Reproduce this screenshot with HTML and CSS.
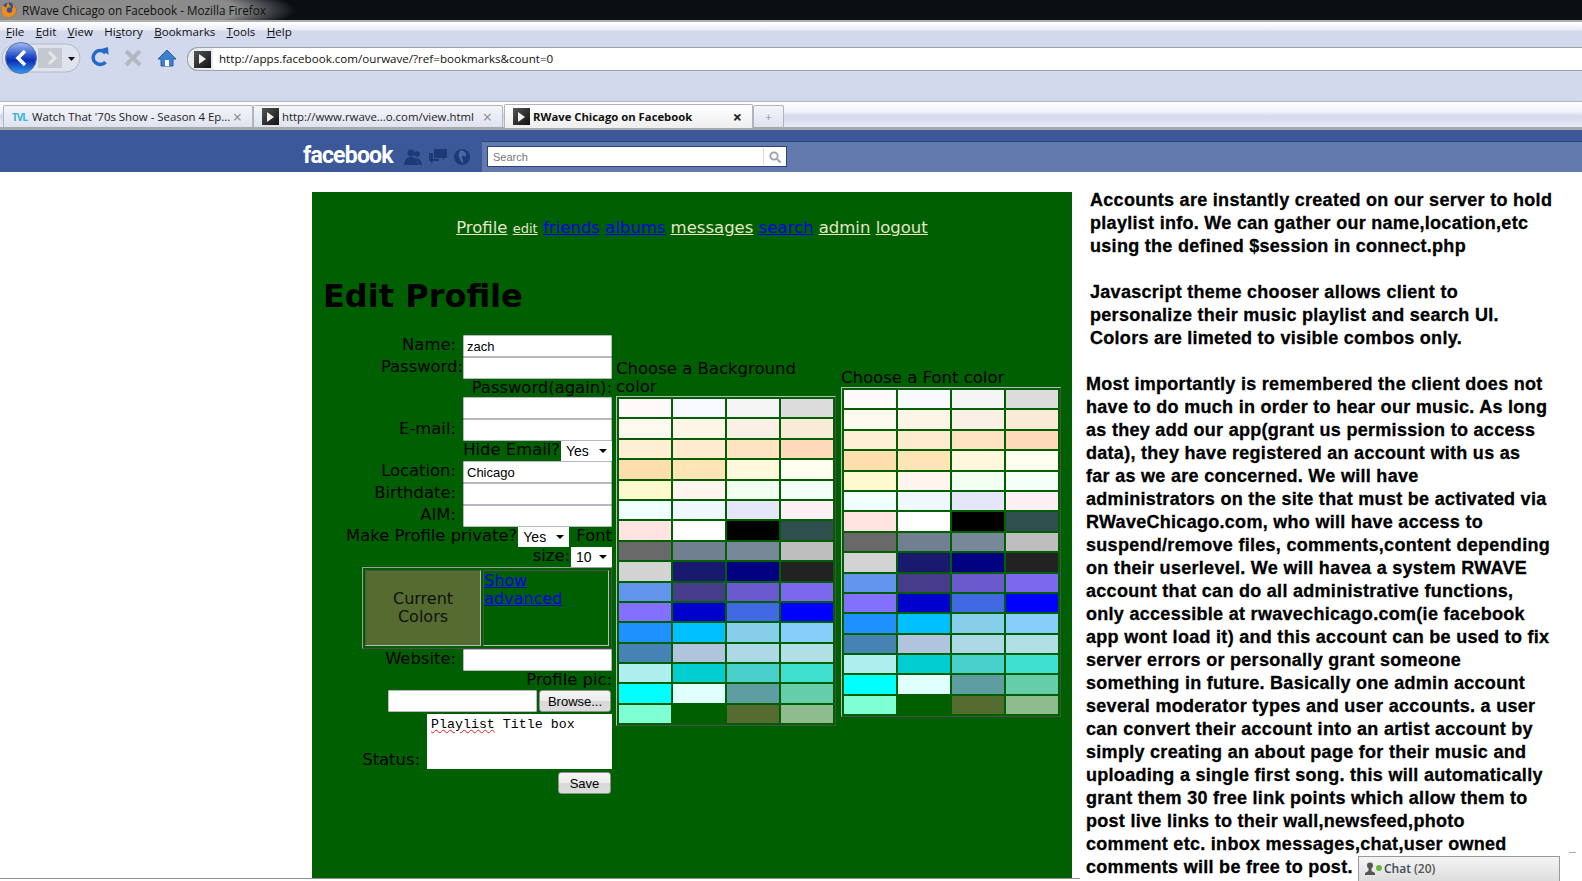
FILE: index.html
```html
<!DOCTYPE html>
<html>
<head>
    <title>RWave Chicago on Facebook - Mozilla Firefox</title>
    <link rel="stylesheet" href="styles.css">
</head>
<body>
    <div class="title-bar">
        <svg class="ff-logo" width="16" height="16" viewBox="0 0 16 16">
            <circle cx="8" cy="8" r="7.5" fill="#2a4f94"/>
            <path d="M2 3 C0 6 0 11 3 14 C6 16.500 12 16 14.500 11.500 C16.500 7 14 3 11 1 C12.500 4 12.500 6 11 6.500 C10 4 8 3.500 7 0.500 C5 3 6 4.500 5 5.500 C4 5 3 4 2 3 Z" fill="#f08a1e"/>
            <circle cx="8.500" cy="8" r="2.700" fill="#31528f"/>
        </svg>
        <span class="title-text">RWave Chicago on Facebook - Mozilla Firefox</span>
    </div>

    <div class="chrome-top">
        <div class="menu-bar">
            <span class="menu-item"><u>F</u>ile</span>
            <span class="menu-item"><u>E</u>dit</span>
            <span class="menu-item"><u>V</u>iew</span>
            <span class="menu-item">Hi<u>s</u>tory</span>
            <span class="menu-item"><u>B</u>ookmarks</span>
            <span class="menu-item"><u>T</u>ools</span>
            <span class="menu-item"><u>H</u>elp</span>
        </div>
        <div class="nav-bar">
            <svg class="nav-buttons" width="187" height="32" viewBox="0 0 187 32">
                <defs>
                    <linearGradient id="backFill" x1="0" y1="0" x2="0" y2="1">
                        <stop offset="0" stop-color="#a6c0f0"/>
                        <stop offset="0.42" stop-color="#2a55cc"/>
                        <stop offset="0.58" stop-color="#0a2fb5"/>
                        <stop offset="1" stop-color="#2f9cf0"/>
                    </linearGradient>
                </defs>
                <rect x="2" y="2" width="78" height="28" rx="14" fill="#dfe3ee" stroke="#b4b9c6"/>
                <rect x="38" y="6" width="24" height="20" fill="#c4c8d0"/>
                <path d="M49 10 L55 16 L49 22" fill="none" stroke="#e4e7ea" stroke-width="3"/>
                <path d="M68 15 H75 L71.500 19 Z" fill="#111"/>
                <circle cx="21" cy="16" r="15.500" fill="url(#backFill)" stroke="#5a6fb0"/>
                <path d="M25 9 L18 16 L25 23" fill="none" stroke="#fff" stroke-width="3.500"/>
                <path d="M105.500 11 A7 7 0 1 0 105.500 20" fill="none" stroke="#2468c8" stroke-width="3.500"/>
                <path d="M101 7 L108 5 L108.500 13 Z" fill="#2468c8"/>
                <path d="M126 9 L140 23 M140 9 L126 23" stroke="#b4b8c0" stroke-width="4"/>
                <path d="M167 8 L158 17 H161 V24 H173 V17 H176 Z" fill="#3f7fd0" stroke="#2a5ba8"/>
                <rect x="165" y="18" width="4" height="6" fill="#fff"/>
            </svg>
            <div class="url-bar">
                <span class="identity"><span class="play"></span></span>
                <span class="url-text">http://apps.facebook.com/ourwave/?ref=bookmarks&amp;count=0</span>
            </div>
        </div>
    </div>

    <div class="tab-strip">
        <div class="tab">
            <span class="tvl">TVL</span>
            <span class="tab-label">Watch That '70s Show - Season 4 Ep...</span>
            <span class="tab-close">×</span>
        </div>
        <div class="tab">
            <span class="identity tab-icon"><span class="play"></span></span>
            <span class="tab-label">http://www.rwave...o.com/view.html</span>
            <span class="tab-close">×</span>
        </div>
        <div class="tab tab-active">
            <span class="identity tab-icon"><span class="play"></span></span>
            <span class="tab-label">RWave Chicago on Facebook</span>
            <span class="tab-close">×</span>
        </div>
        <div class="tab tab-new">+</div>
    </div>

    <div class="fb-bar">
        <span class="fb-logo">facebook</span>
        <svg class="fb-icon" width="18" height="16" viewBox="0 0 18 16">
            <circle cx="7" cy="4" r="3.500" fill="#1d3a74"/>
            <path d="M0 16 C1 10 3 8 7 8 C11 8 13 10 14 16 Z" fill="#1d3a74"/>
            <circle cx="13" cy="5" r="2.800" fill="#1d3a74"/>
            <path d="M12 9 C15 9 17 11 18 16 H15 Z" fill="#1d3a74"/>
        </svg>
        <svg class="fb-icon" width="18" height="16" viewBox="0 0 18 16">
            <path d="M5 0 H18 V9 H15 V11 L13 9 H5 Z" fill="#1d3a74"/>
            <path d="M0 4 H4 V10 H10 V12 H4 L2 15 V12 H0 Z" fill="#1d3a74"/>
        </svg>
        <svg class="fb-icon" width="16" height="16" viewBox="0 0 16 16">
            <circle cx="8" cy="8" r="8" fill="#1d3a74"/>
            <path d="M7 1 C10 2 13 4 12 7 C10 8 9 6 8 7 C7 9 10 10 9 14 C7 13 6 10 5 8 C4 6 5 3 7 1 Z" fill="#4a68a0"/>
        </svg>
        <div class="search-band">
            <div class="search-box">
                <span class="search-text">Search</span>
                <span class="search-btn">
                    <svg width="12" height="12" viewBox="0 0 12 12">
                        <circle cx="5" cy="5" r="3.700" fill="none" stroke="#9aa0ad" stroke-width="1.800"/>
                        <path d="M8 8 L11.500 11.500" stroke="#9aa0ad" stroke-width="2"/>
                    </svg>
                </span>
            </div>
        </div>
    </div>

    <div class="page">
        <div class="panel">
            <div class="nav-links">
                <a class="pale" href="#">Profile</a>
                <a class="pale small" href="#">edit</a>
                <a href="#">friends</a>
                <a href="#">albums</a>
                <a class="pale" href="#">messages</a>
                <a href="#">search</a>
                <a class="pale" href="#">admin</a>
                <a class="pale" href="#">logout</a>
            </div>
            <h1>Edit Profile</h1>
            <div class="columns">
                <form class="profile-form">
                    <div class="row"><label class="gap">Name:</label><input class="field" value="zach"></div>
                    <div class="row"><label>Password:</label><input class="field"></div>
                    <div class="row row-text"><label>Password(again):</label></div>
                    <div class="row"><input class="field"></div>
                    <div class="row"><label class="gap">E-mail:</label><input class="field"></div>
                    <div class="row row-sel"><label>Hide Email?</label><span class="select">Yes</span></div>
                    <div class="row"><label class="gap">Location:</label><input class="field" value="Chicago"></div>
                    <div class="row"><label class="gap">Birthdate:</label><input class="field"></div>
                    <div class="row"><label class="gap">AIM:</label><input class="field"></div>
                    <div class="row row-sel"><label>Make Profile private?</label><span class="select">Yes</span><label class="font-word">Font</label></div>
                    <div class="row row-sel"><label>size:</label><span class="select select-small">10</span></div>
                    <div class="current">
                        <div class="current-cell current-swatch">Current Colors</div>
                        <div class="current-cell current-link"><a href="#">Show advanced</a></div>
                    </div>
                    <div class="row"><label class="gap">Website:</label><input class="field"></div>
                    <div class="row row-text"><label>Profile pic:</label></div>
                    <div class="row row-file"><input class="field"><button type="button" class="btn btn-browse">Browse...</button></div>
                    <div class="row row-status"><label class="gap">Status:</label><div class="status-box"><span class="squiggle">Playlist</span> Title box</div></div>
                    <div class="row row-save"><button type="button" class="btn btn-save">Save</button></div>
                </form>

                <div class="picker picker-bg">
                    <div class="picker-label">Choose a Background color</div>
                    <div class="swatches">
                        <div style="background:snow"></div><div style="background:ghostwhite"></div><div style="background:whitesmoke"></div><div style="background:gainsboro"></div>
                        <div style="background:floralwhite"></div><div style="background:oldlace"></div><div style="background:linen"></div><div style="background:antiquewhite"></div>
                        <div style="background:papayawhip"></div><div style="background:blanchedalmond"></div><div style="background:bisque"></div><div style="background:peachpuff"></div>
                        <div style="background:navajowhite"></div><div style="background:moccasin"></div><div style="background:cornsilk"></div><div style="background:ivory"></div>
                        <div style="background:lemonchiffon"></div><div style="background:seashell"></div><div style="background:honeydew"></div><div style="background:mintcream"></div>
                        <div style="background:azure"></div><div style="background:aliceblue"></div><div style="background:lavender"></div><div style="background:lavenderblush"></div>
                        <div style="background:mistyrose"></div><div style="background:white"></div><div style="background:black"></div><div style="background:darkslategray"></div>
                        <div style="background:dimgray"></div><div style="background:slategray"></div><div style="background:lightslategray"></div><div style="background:#bebebe"></div>
                        <div style="background:lightgray"></div><div style="background:midnightblue"></div><div style="background:navy"></div><div style="background:#222222"></div>
                        <div style="background:cornflowerblue"></div><div style="background:darkslateblue"></div><div style="background:slateblue"></div><div style="background:mediumslateblue"></div>
                        <div style="background:#8470ff"></div><div style="background:mediumblue"></div><div style="background:royalblue"></div><div style="background:blue"></div>
                        <div style="background:dodgerblue"></div><div style="background:deepskyblue"></div><div style="background:skyblue"></div><div style="background:lightskyblue"></div>
                        <div style="background:steelblue"></div><div style="background:lightsteelblue"></div><div style="background:lightblue"></div><div style="background:powderblue"></div>
                        <div style="background:paleturquoise"></div><div style="background:darkturquoise"></div><div style="background:mediumturquoise"></div><div style="background:turquoise"></div>
                        <div style="background:cyan"></div><div style="background:lightcyan"></div><div style="background:cadetblue"></div><div style="background:mediumaquamarine"></div>
                        <div style="background:aquamarine"></div><div style="background:#005f00"></div><div style="background:darkolivegreen"></div><div style="background:darkseagreen"></div>
                    </div>
                </div>

                <div class="picker picker-font">
                    <div class="picker-label">Choose a Font color</div>
                    <div class="swatches">
                        <div style="background:snow"></div><div style="background:ghostwhite"></div><div style="background:whitesmoke"></div><div style="background:gainsboro"></div>
                        <div style="background:floralwhite"></div><div style="background:oldlace"></div><div style="background:linen"></div><div style="background:antiquewhite"></div>
                        <div style="background:papayawhip"></div><div style="background:blanchedalmond"></div><div style="background:bisque"></div><div style="background:peachpuff"></div>
                        <div style="background:navajowhite"></div><div style="background:moccasin"></div><div style="background:cornsilk"></div><div style="background:ivory"></div>
                        <div style="background:lemonchiffon"></div><div style="background:seashell"></div><div style="background:honeydew"></div><div style="background:mintcream"></div>
                        <div style="background:azure"></div><div style="background:aliceblue"></div><div style="background:lavender"></div><div style="background:lavenderblush"></div>
                        <div style="background:mistyrose"></div><div style="background:white"></div><div style="background:black"></div><div style="background:darkslategray"></div>
                        <div style="background:dimgray"></div><div style="background:slategray"></div><div style="background:lightslategray"></div><div style="background:#bebebe"></div>
                        <div style="background:lightgray"></div><div style="background:midnightblue"></div><div style="background:navy"></div><div style="background:#222222"></div>
                        <div style="background:cornflowerblue"></div><div style="background:darkslateblue"></div><div style="background:slateblue"></div><div style="background:mediumslateblue"></div>
                        <div style="background:#8470ff"></div><div style="background:mediumblue"></div><div style="background:royalblue"></div><div style="background:blue"></div>
                        <div style="background:dodgerblue"></div><div style="background:deepskyblue"></div><div style="background:skyblue"></div><div style="background:lightskyblue"></div>
                        <div style="background:steelblue"></div><div style="background:lightsteelblue"></div><div style="background:lightblue"></div><div style="background:powderblue"></div>
                        <div style="background:paleturquoise"></div><div style="background:darkturquoise"></div><div style="background:mediumturquoise"></div><div style="background:turquoise"></div>
                        <div style="background:cyan"></div><div style="background:lightcyan"></div><div style="background:cadetblue"></div><div style="background:mediumaquamarine"></div>
                        <div style="background:aquamarine"></div><div style="background:#005f00"></div><div style="background:darkolivegreen"></div><div style="background:darkseagreen"></div>
                    </div>
                </div>
            </div>
        </div>

        <div class="notes">
            <p class="note-top">Accounts are instantly created on our server to hold<br>playlist info. We can gather our name,location,etc<br>using the defined $session in connect.php</p>
            <p class="note-top">Javascript theme chooser allows client to<br>personalize their music playlist and search UI.<br>Colors are limeted to visible combos only.</p>
            <p>Most importantly is remembered the client does not<br>have to do much in order to hear our music. As long<br>as they add our app(grant us permission to access<br>data), they have registered an account with us as<br>far as we are concerned. We will have<br>administrators on the site that must be activated via<br>RWaveChicago.com, who will have access to<br>suspend/remove files, comments,content depending<br>on their userlevel. We will havea a system RWAVE<br>account that can do all administrative functions,<br>only accessible at rwavechicago.com(ie facebook<br>app wont load it) and this account can be used to fix<br>server errors or personally grant someone<br>something in future. Basically one admin account<br>several moderator types and user accounts. a user<br>can convert their account into an artist account by<br>simply creating an about page for their music and<br>uploading a single first song. this will automatically<br>grant them 30 free link points which allow them to<br>post live links to their wall,newsfeed,photo<br>comment etc. inbox messages,chat,user owned<br>comments will be free to post.</p>
        </div>
    </div>

    <div class="page-line"></div>
    <div class="side-dash"></div>
    <div class="chat-tab">
        <svg width="10" height="13" viewBox="0 0 10 13">
            <circle cx="5" cy="3.500" r="3" fill="#555"/>
            <path d="M3.500 6 H6.500 V9 L10 11 V13 H0 V11 L3.500 9 Z" fill="#555"/>
        </svg>
        <span class="chat-dot"></span>
        <span class="chat-label">Chat <span class="chat-count">(20)</span></span>
    </div>
</body>
</html>
```

FILE: styles.css
```css
:root {
    --panel-green: #005f00;
    --fb-blue: #3b5998;
    --fb-band: #627aad;
    --chrome-blue: #d3d9ed;
    --ui-font: "Open Sans", "Noto Sans", sans-serif;
    --page-font: "DejaVu Sans", sans-serif;
}
html, body {
    margin: 0;
    height: 881px;
    overflow: hidden;
    background-color: #ffffff;
}
body {
    position: relative;
    font-family: var(--page-font);
}

/* window chrome */
.title-bar {
    height: 20px;
    display: flex;
    align-items: center;
    background: radial-gradient(ellipse 205px 30px at 90px 10px, #8f8f8f 0, #8a8a8a 72%, rgba(10, 15, 20, 0) 100%), #0a0f14;
    border-bottom: 2px solid #b0b0b0;
}
.ff-logo {
    margin-left: 1px;
    flex-shrink: 0;
}
.title-text {
    margin-left: 5px;
    font-family: var(--ui-font);
    font-size: 11.700px;
    color: #111111;
}
.chrome-top {
    height: 79px;
    background: linear-gradient(#ffffff 0, #e8ecf6 8px, var(--chrome-blue) 9px);
    border-bottom: 1px solid #b4b6c0;
}
.menu-bar {
    height: 25px;
    display: flex;
    align-items: center;
    padding: 0 0 6px 6px;
    box-sizing: border-box;
    gap: 11.300px;
    font-family: var(--ui-font);
    font-size: 11.600px;
    color: #111111;
}
.nav-bar {
    position: relative;
    height: 22px;
    margin-left: 187px;
    background: linear-gradient(to right, #e8ebf2 25px, #ffffff 25px);
    border: 1px solid #a0a0a8;
    border-right: 0;
    border-radius: 11px 0 0 11px;
}
.nav-buttons {
    position: absolute;
    left: -188px;
    top: -6px;
}
.url-bar {
    display: flex;
    align-items: center;
    height: 100%;
}
.identity {
    display: inline-flex;
    align-items: center;
    justify-content: center;
    width: 17px;
    height: 17px;
    background: linear-gradient(135deg, #555555, #111111);
}
.play {
    width: 0;
    height: 0;
    border-left: 7px solid #f0f0f0;
    border-top: 5px solid transparent;
    border-bottom: 5px solid transparent;
}
.nav-bar .identity {
    margin-left: 6px;
}
.url-text {
    margin: 0 0 2px 8px;
    font-family: var(--ui-font);
    font-size: 11.600px;
    color: #111111;
}

.tab-strip {
    height: 25px;
    display: flex;
    align-items: flex-end;
    padding-left: 3px;
    background: linear-gradient(#ffffff 0, #f0f2fa 10px, var(--chrome-blue) 14px, #e6eaf6 25px);
    border-bottom: 3px solid #a8a8a8;
}
.tab {
    width: 250px;
    height: 22px;
    box-sizing: border-box;
    display: flex;
    align-items: center;
    padding: 0 10px 0 8px;
    border: 1px solid #b0b4c0;
    border-bottom: 0;
    border-radius: 2px 2px 0 0;
    background: linear-gradient(#f4f5fa, #dfe3f0);
    font-family: var(--ui-font);
    font-size: 11.400px;
    color: #222222;
}
.tab-active {
    height: 24px;
    margin-bottom: -1px;
    margin-left: 1px;
    background: linear-gradient(#ffffff, #eeeeee);
    font-weight: 700;
    font-size: 11.300px;
    color: #111111;
    width: 249px;
}
.tab-new {
    width: 31px;
    justify-content: center;
    padding: 0;
    color: #8a8e9a;
}
.tvl {
    font-size: 10px;
    font-weight: 700;
    color: #35b4dc;
    letter-spacing: -1px;
    margin-right: 5px;
}
.tab-icon {
    margin-right: 3px;
}
.tab-label {
    flex: 1;
    white-space: nowrap;
}
.tab-close {
    font-size: 16px;
    line-height: 16px;
    color: #8a8a8a;
}
.tab-active .tab-close {
    color: #222222;
}

/* facebook header */
.fb-bar {
    height: 42px;
    display: flex;
    background-color: var(--fb-blue);
    padding-left: 303px;
}
.fb-logo {
    width: 94px;
    flex-shrink: 0;
    margin-top: 12px;
    font-family: Roboto, sans-serif;
    font-size: 23px;
    line-height: 28px;
    font-weight: 700;
    letter-spacing: -0.800px;
    color: #ffffff;
}
.fb-icon {
    margin-top: 19px;
    margin-left: 7px;
    flex-shrink: 0;
}
.search-band {
    flex: 1;
    margin-left: 12px;
    margin-top: 11px;
    background-color: var(--fb-band);
    border-top: 1px solid #2a4480;
    padding: 4px 0 0 5px;
}
.search-box {
    width: 300px;
    height: 21px;
    box-sizing: border-box;
    display: flex;
    align-items: center;
    justify-content: space-between;
    background-color: #ffffff;
    border: 1px solid #2a4480;
    padding-left: 5px;
}
.search-text {
    font-family: "Liberation Sans", sans-serif;
    font-size: 11px;
    color: #777777;
}
.search-btn {
    display: flex;
    align-items: center;
    justify-content: center;
    width: 22px;
    height: 17px;
    border-left: 1px solid #d8dce4;
}

/* page content */
.page {
    display: flex;
    padding: 20px 0 0 312px;
}
.panel {
    width: 760px;
    height: 686px;
    box-sizing: border-box;
    background-color: var(--panel-green);
    color: #000000;
    flex-shrink: 0;
}
.nav-links {
    padding-top: 25px;
    text-align: center;
    font-size: 16.500px;
    line-height: 22px;
}
.nav-links a {
    color: #0000ee;
}
.nav-links a.pale {
    color: #e4e6c8;
}
.nav-links a.small {
    font-size: 13px;
}
h1 {
    margin: 36px 0 0 11px;
    font-size: 32px;
    line-height: 40px;
    font-weight: 700;
}
.columns {
    display: flex;
    align-items: flex-start;
    margin-top: 19px;
    padding-left: 20px;
}
.profile-form {
    width: 280px;
    font-size: 16.400px;
    flex-shrink: 0;
}
.row {
    display: flex;
    justify-content: flex-end;
    align-items: center;
    height: 22px;
    white-space: nowrap;
}
.row label {
    margin-bottom: 4px;
}
.row-text {
    height: 18px;
}
.row-text label {
    margin-bottom: 2px;
}
.row-sel {
    height: 20px;
}
label.gap {
    margin-right: 7px;
}
.field {
    width: 149px;
    height: 22px;
    box-sizing: border-box;
    margin: 0;
    padding: 0 3px;
    border: 1px solid #b8b8c0;
    border-radius: 1px;
    background-color: #ffffff;
    font-family: "Liberation Sans", sans-serif;
    font-size: 13px;
    color: #000000;
}
.select {
    position: relative;
    display: inline-block;
    width: 51px;
    height: 20px;
    box-sizing: border-box;
    padding-left: 5px;
    margin-left: 1px;
    background-color: #ffffff;
    font-family: "Liberation Sans", sans-serif;
    font-size: 14px;
    line-height: 20px;
}
.select::after {
    content: "";
    position: absolute;
    right: 5px;
    top: 8px;
    border-left: 4px solid transparent;
    border-right: 4px solid transparent;
    border-top: 4px solid #000000;
}
.select-small {
    width: 41px;
}
.font-word {
    margin-left: 7px;
}
.current {
    display: flex;
    gap: 2px;
    height: 82px;
    box-sizing: border-box;
    width: 250px;
    margin-left: 30px;
    padding: 2px;
    border: 1px solid;
    border-color: #9aa59a #4a4f4a #4a4f4a #9aa59a;
    font-size: 16px;
}
.current-cell {
    box-sizing: border-box;
    width: 126px;
    border: 1px solid;
    border-color: #4a4f4a #b8bcb8 #b8bcb8 #4a4f4a;
    line-height: 18px;
}
.current-link {
    padding-top: 1px;
}
.current-cell a {
    color: #0000ee;
}
.current-swatch {
    width: 116px;
    display: flex;
    align-items: center;
    justify-content: center;
    text-align: center;
    background-color: #556b2f;
    color: #111111;
}
.row-file {
    height: 24px;
}
.row-file .field {
    width: 149px;
}
.btn {
    font-family: "Liberation Sans", sans-serif;
    font-size: 13px;
    padding: 0;
    border: 1px solid #8e8f8f;
    border-radius: 3px;
    background: linear-gradient(#f4f4f4 0, #ececec 48%, #d8d8d8 52%, #dddddd 100%);
    color: #000000;
}
.btn-browse {
    width: 72px;
    height: 22px;
    margin: 0 1px 0 2px;
}
.btn-save {
    width: 53px;
    height: 22px;
    margin-right: 1px;
}
.row-status {
    height: 55px;
    margin-top: 1px;
    align-items: flex-end;
}
.row-status label {
    margin-bottom: 0;
}
.status-box {
    width: 185px;
    height: 55px;
    box-sizing: border-box;
    padding: 3px 4px;
    background-color: #ffffff;
    font-family: "Liberation Mono", monospace;
    font-size: 13.300px;
    line-height: 15px;
}
.squiggle {
    text-decoration: underline wavy #e02020 1px;
}
.row-save {
    margin-top: 3px;
}
.picker {
    flex-shrink: 0;
    width: 220px;
    font-size: 16.500px;
    line-height: 18px;
}
.picker-bg {
    margin: 25px 0 0 4px;
}
.picker-font {
    margin: 34px 0 0 5px;
}
.swatches {
    display: grid;
    grid-template-columns: repeat(4, 52px);
    grid-auto-rows: 18.400px;
    gap: 2px;
    padding: 2px;
    width: max-content;
    border: 1px solid;
    border-color: #b8bcb8 #4a4f4a #4a4f4a #b8bcb8;
}

/* right column notes */
.notes {
    margin-top: -3px;
    padding-left: 14px;
    font-family: "Liberation Sans", sans-serif;
    font-size: 18px;
    font-weight: 700;
    letter-spacing: 0.290px;
    -webkit-text-stroke: 0.300px #000000;
    line-height: 23px;
    color: #000000;
    white-space: nowrap;
}
.notes p {
    margin: 0 0 23px;
}
.note-top {
    padding-left: 4px;
}
.page-line {
    position: absolute;
    left: 0;
    top: 878px;
    width: 1080px;
    height: 1px;
    background-color: #909090;
}
.side-dash {
    position: absolute;
    left: 1569px;
    top: 852px;
    width: 7px;
    height: 1px;
    background-color: #aaaaaa;
}
.chat-tab {
    position: absolute;
    left: 1358px;
    top: 856px;
    width: 202px;
    height: 26px;
    box-sizing: border-box;
    display: flex;
    align-items: center;
    padding: 0 0 3px 6px;
    border: 1px solid #999999;
    border-bottom: 0;
    background: linear-gradient(#f4f4f4, #dcdcdc);
}
.chat-dot {
    width: 6px;
    height: 6px;
    margin-left: 1px;
    border-radius: 50%;
    background-color: #6cb33f;
}
.chat-label {
    margin-left: 2px;
    font-family: var(--ui-font);
    font-size: 12px;
    font-weight: 600;
    color: #3a4a5a;
}
.chat-count {
    color: #555555;
}
```
